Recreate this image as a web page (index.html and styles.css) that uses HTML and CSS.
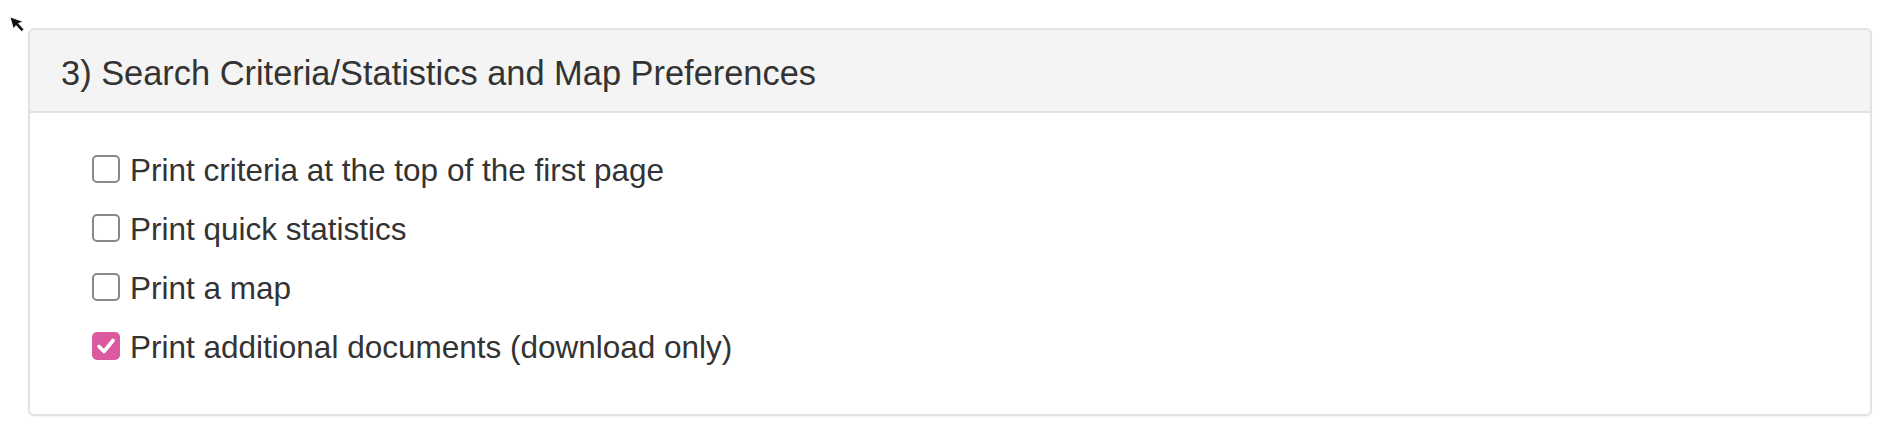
FILE: index.html
```html
<!DOCTYPE html>
<html>
<head>
<meta charset="utf-8">
<link rel="stylesheet" href="styles.css">
</head>
<body>
<svg class="cursor" width="24" height="24" viewBox="0 0 24 24"><path d="M4 4 L17 8.5 L12.5 10.5 L18 16.5 L15.5 18.5 L10 12.5 L7.5 16 Z" fill="#111" stroke="#fff" stroke-width="0.8"/></svg>
<div class="panel">
  <div class="panel-heading">3) Search Criteria/Statistics and Map Preferences</div>
  <div class="panel-body">
    <label class="option"><span class="box"></span>Print criteria at the top of the first page</label>
    <label class="option"><span class="box"></span>Print quick statistics</label>
    <label class="option"><span class="box"></span>Print a map</label>
    <label class="option"><span class="box checked"><svg viewBox="0 0 28 28" width="28" height="28"><path d="M7 14.5 L12 19.5 L21 8.5" fill="none" stroke="#fff" stroke-width="3.6" stroke-linecap="round" stroke-linejoin="round"/></svg></span>Print additional documents (download only)</label>
  </div>
</div>
</body>
</html>
```
FILE: styles.css
```css
html, body {
  margin: 0;
  padding: 0;
  background: #fff;
}
body {
  font-family: "Liberation Sans", Arial, Helvetica, sans-serif;
  color: #333;
  position: relative;
  height: 435px;
  overflow: hidden;
}
.cursor {
  position: absolute;
  left: 6px;
  top: 13px;
}
.panel {
  margin: 28px 15px 0 28px;
  border: 2px solid #e2e2e2;
  border-radius: 6px;
  box-shadow: 0 1px 2px rgba(0,0,0,0.06);
  background: #fff;
  overflow: hidden;
}
.panel-heading {
  background: #f4f4f4;
  border-bottom: 2px solid #e2e2e2;
  font-size: 34.4px;
  line-height: 37px;
  padding: 24.5px 32px 19.5px 31px;
  color: #333;
}
.panel-body {
  padding: 28px 32px 36.5px 62px;
  display: flex;
  flex-direction: column;
}
.option {
  font-size: 31.5px;
  line-height: 59px;
  white-space: nowrap;
}
.box {
  display: inline-block;
  box-sizing: border-box;
  width: 28px;
  height: 28px;
  border: 2px solid #888;
  border-radius: 5px;
  background: #fff;
  vertical-align: -2px;
  margin-right: 10px;
  position: relative;
}
.box.checked {
  background: #db5a9f;
  border-color: #db5a9f;
}
.box.checked svg {
  position: absolute;
  left: -2px;
  top: -2px;
}
```
